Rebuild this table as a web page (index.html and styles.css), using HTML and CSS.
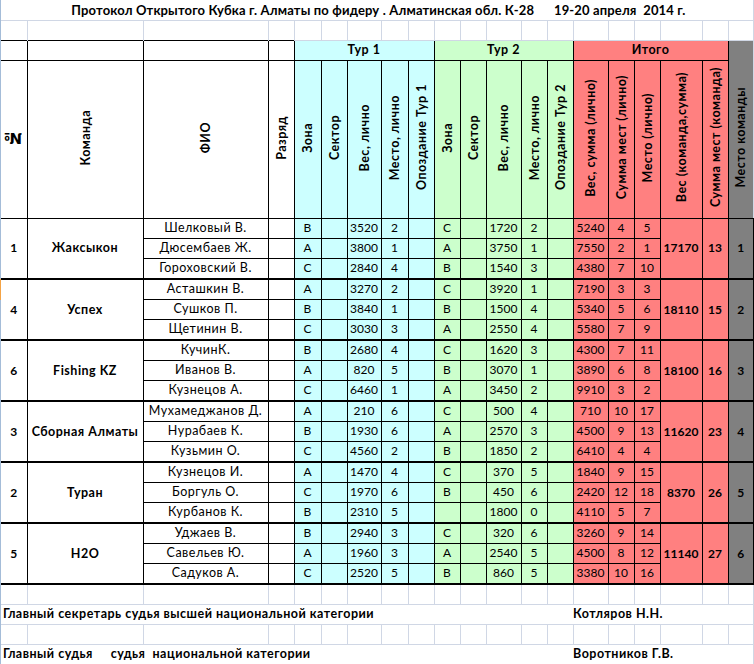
FILE: index.html
```html
<!DOCTYPE html>
<html lang="ru">
<head>
<meta charset="utf-8">
<title>Протокол</title>
<link rel="stylesheet" href="styles.css">
</head>
<body>
<div class="sheet">
<span class="rowmark"></span>
<table class="grid">
<colgroup>
<col class="w26"><col class="w116"><col class="w125"><col class="w26">
<col class="w27"><col class="w26"><col class="w34"><col class="w27"><col class="w26">
<col class="w26"><col class="w26"><col class="w35"><col class="w26"><col class="w26">
<col class="w35"><col class="w26"><col class="w26"><col class="w42"><col class="w26">
<col class="w25">
</colgroup>
<tbody>
<tr class="h20"><td colspan="20" class="title">Протокол Открытого Кубка г. Алматы по фидеру . Алматинская обл. К-28      19-20 апреля  2014 г.</td></tr>
<tr class="h20 blank top"><td class="first"></td><td></td><td></td><td></td><td></td><td></td><td></td><td></td><td></td><td></td><td></td><td></td><td></td><td></td><td></td><td></td><td></td><td></td><td></td><td class="last"></td></tr>
<tr class="h20 thead">
<td class="hb first"></td><td class="hb"></td><td class="hb"></td><td class="hb"></td>
<td colspan="5" class="tour t1">Тур 1</td>
<td colspan="5" class="tour t2">Тур 2</td>
<td colspan="5" class="tour it">Итого</td>
<td class="pl gtop"></td>
</tr>
<tr class="h158 vhead">
<td class="hb first"><span class="vt numsign">№</span></td>
<td class="hb"><span class="vt">Команда</span></td>
<td class="hb"><span class="vt">ФИО</span></td>
<td class="hb"><span class="vt">Разряд</span></td>
<td class="t1"><span class="vt">Зона</span></td>
<td class="t1"><span class="vt">Сектор</span></td>
<td class="t1"><span class="vt">Вес, лично</span></td>
<td class="t1"><span class="vt">Место, лично</span></td>
<td class="t1"><span class="vt">Опоздание Тур 1</span></td>
<td class="t2"><span class="vt">Зона</span></td>
<td class="t2"><span class="vt">Сектор</span></td>
<td class="t2"><span class="vt">Вес, лично</span></td>
<td class="t2"><span class="vt">Место, лично</span></td>
<td class="t2"><span class="vt">Опоздание Тур 2</span></td>
<td class="it"><span class="vt">Вес, сумма (лично)</span></td>
<td class="it"><span class="vt">Сумма мест (лично)</span></td>
<td class="it"><span class="vt">Место (лично)</span></td>
<td class="it"><span class="vt">Вес (команда,сумма)</span></td>
<td class="it"><span class="vt">Сумма мест (команда)</span></td>
<td class="pl gbot"><span class="vt">Место команды</span></td>
</tr>
</tbody>

<tbody class="grp">
<tr class="h20"><td rowspan="3" class="first b num">1</td><td rowspan="3" class="b txt">Жаксыкон</td><td class="txt">Шелковый В.</td><td></td>
<td class="t1">B</td><td class="t1"></td><td class="t1">3520</td><td class="t1">2</td><td class="t1"></td>
<td class="t2">C</td><td class="t2"></td><td class="t2">1720</td><td class="t2">2</td><td class="t2"></td>
<td class="it">5240</td><td class="it">4</td><td class="it">5</td>
<td rowspan="3" class="it b">17170</td><td rowspan="3" class="it b">13</td><td rowspan="3" class="pl b">1</td></tr>
<tr class="h20"><td class="txt">Дюсембаев Ж.</td><td></td>
<td class="t1">A</td><td class="t1"></td><td class="t1">3800</td><td class="t1">1</td><td class="t1"></td>
<td class="t2">A</td><td class="t2"></td><td class="t2">3750</td><td class="t2">1</td><td class="t2"></td>
<td class="it">7550</td><td class="it">2</td><td class="it">1</td></tr>
<tr class="h21"><td class="txt">Гороховский В.</td><td></td>
<td class="t1">C</td><td class="t1"></td><td class="t1">2840</td><td class="t1">4</td><td class="t1"></td>
<td class="t2">B</td><td class="t2"></td><td class="t2">1540</td><td class="t2">3</td><td class="t2"></td>
<td class="it">4380</td><td class="it">7</td><td class="it">10</td></tr>
</tbody>

<tbody class="grp">
<tr class="h20"><td rowspan="3" class="first b num">4</td><td rowspan="3" class="b txt">Успех</td><td class="txt">Асташкин В.</td><td></td>
<td class="t1">A</td><td class="t1"></td><td class="t1">3270</td><td class="t1">2</td><td class="t1"></td>
<td class="t2">C</td><td class="t2"></td><td class="t2">3920</td><td class="t2">1</td><td class="t2"></td>
<td class="it">7190</td><td class="it">3</td><td class="it">3</td>
<td rowspan="3" class="it b">18110</td><td rowspan="3" class="it b">15</td><td rowspan="3" class="pl b">2</td></tr>
<tr class="h20"><td class="txt">Сушков П.</td><td></td>
<td class="t1">B</td><td class="t1"></td><td class="t1">3840</td><td class="t1">1</td><td class="t1"></td>
<td class="t2">B</td><td class="t2"></td><td class="t2">1500</td><td class="t2">4</td><td class="t2"></td>
<td class="it">5340</td><td class="it">5</td><td class="it">6</td></tr>
<tr class="h21"><td class="txt">Щетинин В.</td><td></td>
<td class="t1">C</td><td class="t1"></td><td class="t1">3030</td><td class="t1">3</td><td class="t1"></td>
<td class="t2">A</td><td class="t2"></td><td class="t2">2550</td><td class="t2">4</td><td class="t2"></td>
<td class="it">5580</td><td class="it">7</td><td class="it">9</td></tr>
</tbody>

<tbody class="grp">
<tr class="h20"><td rowspan="3" class="first b num">6</td><td rowspan="3" class="b txt">Fishing KZ</td><td class="txt">КучинК.</td><td></td>
<td class="t1">B</td><td class="t1"></td><td class="t1">2680</td><td class="t1">4</td><td class="t1"></td>
<td class="t2">C</td><td class="t2"></td><td class="t2">1620</td><td class="t2">3</td><td class="t2"></td>
<td class="it">4300</td><td class="it">7</td><td class="it">11</td>
<td rowspan="3" class="it b">18100</td><td rowspan="3" class="it b">16</td><td rowspan="3" class="pl b">3</td></tr>
<tr class="h20"><td class="txt">Иванов В.</td><td></td>
<td class="t1">A</td><td class="t1"></td><td class="t1">820</td><td class="t1">5</td><td class="t1"></td>
<td class="t2">B</td><td class="t2"></td><td class="t2">3070</td><td class="t2">1</td><td class="t2"></td>
<td class="it">3890</td><td class="it">6</td><td class="it">8</td></tr>
<tr class="h21"><td class="txt">Кузнецов А.</td><td></td>
<td class="t1">C</td><td class="t1"></td><td class="t1">6460</td><td class="t1">1</td><td class="t1"></td>
<td class="t2">A</td><td class="t2"></td><td class="t2">3450</td><td class="t2">2</td><td class="t2"></td>
<td class="it">9910</td><td class="it">3</td><td class="it">2</td></tr>
</tbody>

<tbody class="grp">
<tr class="h20"><td rowspan="3" class="first b num">3</td><td rowspan="3" class="b txt">Сборная Алматы</td><td class="txt">Мухамеджанов Д.</td><td></td>
<td class="t1">A</td><td class="t1"></td><td class="t1">210</td><td class="t1">6</td><td class="t1"></td>
<td class="t2">C</td><td class="t2"></td><td class="t2">500</td><td class="t2">4</td><td class="t2"></td>
<td class="it">710</td><td class="it">10</td><td class="it">17</td>
<td rowspan="3" class="it b">11620</td><td rowspan="3" class="it b">23</td><td rowspan="3" class="pl b">4</td></tr>
<tr class="h20"><td class="txt">Нурабаев К.</td><td></td>
<td class="t1">B</td><td class="t1"></td><td class="t1">1930</td><td class="t1">6</td><td class="t1"></td>
<td class="t2">A</td><td class="t2"></td><td class="t2">2570</td><td class="t2">3</td><td class="t2"></td>
<td class="it">4500</td><td class="it">9</td><td class="it">13</td></tr>
<tr class="h21"><td class="txt">Кузьмин О.</td><td></td>
<td class="t1">C</td><td class="t1"></td><td class="t1">4560</td><td class="t1">2</td><td class="t1"></td>
<td class="t2">B</td><td class="t2"></td><td class="t2">1850</td><td class="t2">2</td><td class="t2"></td>
<td class="it">6410</td><td class="it">4</td><td class="it">4</td></tr>
</tbody>

<tbody class="grp">
<tr class="h20"><td rowspan="3" class="first b num">2</td><td rowspan="3" class="b txt">Туран</td><td class="txt">Кузнецов И.</td><td></td>
<td class="t1">A</td><td class="t1"></td><td class="t1">1470</td><td class="t1">4</td><td class="t1"></td>
<td class="t2">C</td><td class="t2"></td><td class="t2">370</td><td class="t2">5</td><td class="t2"></td>
<td class="it">1840</td><td class="it">9</td><td class="it">15</td>
<td rowspan="3" class="it b">8370</td><td rowspan="3" class="it b">26</td><td rowspan="3" class="pl b">5</td></tr>
<tr class="h20"><td class="txt">Боргуль О.</td><td></td>
<td class="t1">C</td><td class="t1"></td><td class="t1">1970</td><td class="t1">6</td><td class="t1"></td>
<td class="t2">B</td><td class="t2"></td><td class="t2">450</td><td class="t2">6</td><td class="t2"></td>
<td class="it">2420</td><td class="it">12</td><td class="it">18</td></tr>
<tr class="h21"><td class="txt">Курбанов К.</td><td></td>
<td class="t1">B</td><td class="t1"></td><td class="t1">2310</td><td class="t1">5</td><td class="t1"></td>
<td class="t2"></td><td class="t2"></td><td class="t2">1800</td><td class="t2">0</td><td class="t2"></td>
<td class="it">4110</td><td class="it">5</td><td class="it">7</td></tr>
</tbody>

<tbody class="grp">
<tr class="h20"><td rowspan="3" class="first b num">5</td><td rowspan="3" class="b txt">H2O</td><td class="txt">Уджаев В.</td><td></td>
<td class="t1">B</td><td class="t1"></td><td class="t1">2940</td><td class="t1">3</td><td class="t1"></td>
<td class="t2">C</td><td class="t2"></td><td class="t2">320</td><td class="t2">6</td><td class="t2"></td>
<td class="it">3260</td><td class="it">9</td><td class="it">14</td>
<td rowspan="3" class="it b">11140</td><td rowspan="3" class="it b">27</td><td rowspan="3" class="pl b">6</td></tr>
<tr class="h20"><td class="txt">Савельев Ю.</td><td></td>
<td class="t1">A</td><td class="t1"></td><td class="t1">1960</td><td class="t1">3</td><td class="t1"></td>
<td class="t2">A</td><td class="t2"></td><td class="t2">2540</td><td class="t2">5</td><td class="t2"></td>
<td class="it">4500</td><td class="it">8</td><td class="it">12</td></tr>
<tr class="h21"><td class="txt">Садуков А.</td><td></td>
<td class="t1">C</td><td class="t1"></td><td class="t1">2520</td><td class="t1">5</td><td class="t1"></td>
<td class="t2">B</td><td class="t2"></td><td class="t2">860</td><td class="t2">5</td><td class="t2"></td>
<td class="it">3380</td><td class="it">10</td><td class="it">16</td></tr>
</tbody>

<tbody class="foot">
<tr class="h20 blank"><td class="first"></td><td></td><td></td><td></td><td></td><td></td><td></td><td></td><td></td><td></td><td></td><td></td><td></td><td></td><td></td><td></td><td></td><td></td><td></td><td class="last"></td></tr>
<tr class="h20 sign"><td colspan="14" class="first">Главный секретарь судья высшей национальной категории</td><td colspan="6" class="last">Котляров Н.Н.</td></tr>
<tr class="h20 blank"><td class="first"></td><td></td><td></td><td></td><td></td><td></td><td></td><td></td><td></td><td></td><td></td><td></td><td></td><td></td><td></td><td></td><td></td><td></td><td></td><td class="last"></td></tr>
<tr class="h20 sign"><td colspan="14" class="first">Главный судья     судья  национальной категории</td><td colspan="6" class="last">Воротников Г.В.</td></tr>
</tbody>
</table>
</div>
</body>
</html>
```
FILE: styles.css
```css
html, body {
  margin: 0;
  padding: 0;
  background: #fff;
  overflow: hidden;
}

.sheet {
  position: relative;
  width: 753px;
  border-left: 1px solid #a4bcd8;
  font-family: Lato, "Noto Sans", sans-serif;
  font-size: 12px;
  color: #000;
}

.rowmark {
  position: absolute;
  left: -1px;
  top: 279px;
  width: 1px;
  height: 21px;
  background: #f4a345;
}

.grid {
  border-collapse: collapse;
  table-layout: fixed;
  width: 752px;
}

.w25 { width: 25px; }
.w26 { width: 26px; }
.w27 { width: 27px; }
.w34 { width: 34px; }
.w35 { width: 35px; }
.w42 { width: 42px; }
.w116 { width: 116px; }
.w125 { width: 125px; }

.grid td {
  padding: 0 1px;
  text-align: center;
  vertical-align: middle;
  white-space: nowrap;
  overflow: hidden;
  border: 1px solid #000;
  line-height: 14px;
}

.h20 { height: 20px; }
.h21 { height: 21px; }
.h158 { height: 158px; }

.grid td.first { border-left: none; }

/* wider text (names, teams, headers, signatures) */
.grid td.txt,
.vt,
.tour,
.sign td {
  font-size: 12.5px;
  letter-spacing: 0.5px;
}

.vt.numsign {
  font-family: "DejaVu Sans", sans-serif;
  font-size: 15px;
  letter-spacing: 0;
}

/* title row */
.grid td.title {
  border: none;
  border-bottom: 1px solid #d0d7e5;
  border-right: 1px solid #d0d7e5;
  font-weight: 700;
  font-size: 13px;
  letter-spacing: 0.15px;
  white-space: pre;
  padding-left: 4px;
}

/* empty gridline rows */
.blank td {
  border: 1px solid #d0d7e5;
}
.blank td.first { border-left: none; }
.top td { border-bottom: none; }

/* header */
.thead td { border-top: 1px solid #d0d7e5; }
.thead td.hb { border-top: 1px solid #000; }
.tour { font-weight: 700; }
.gtop { border-bottom: none !important; border-right-color: #d0d7e5 !important; }
.gbot { border-top: none !important; border-right-color: #d0d7e5 !important; }

.vhead td { font-weight: 700; }

.vt {
  display: inline-block;
  writing-mode: vertical-rl;
  transform: rotate(180deg);
  white-space: nowrap;
  line-height: 15px;
}

/* fills */
.t1 { background: #ccffff; }
.t2 { background: #ccffcc; }
.it { background: #ff8080; }
.pl { background: #808080; }

.b { font-weight: 700; }

/* group borders */
.grp tr:last-child td,
.grp td[rowspan] {
  border-bottom: 2px solid #000;
}

/* signature rows */
.sign td {
  border: none;
  border-bottom: 1px solid #d0d7e5;
  text-align: left;
  font-weight: 700;
  white-space: pre;
  padding: 0 2px;
}
.sign td.last {
  border-right: 1px solid #d0d7e5;
  padding-left: 0;
}
```
